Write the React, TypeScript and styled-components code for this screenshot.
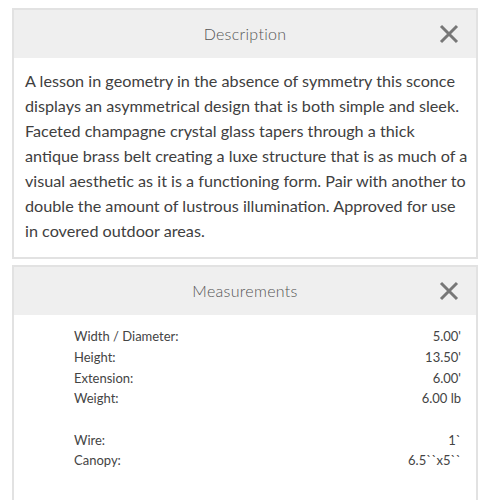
import React from "react";
import styled, { createGlobalStyle } from "styled-components";

const Global = createGlobalStyle`
  html, body { margin: 0; padding: 0; background: #fff; }
  body { font-family: "Lato", "Noto Sans", sans-serif; }
`;

const Page = styled.div`
  padding: 8px 12px 0;
  display: flex;
  flex-direction: column;
  gap: 6px;
`;

const Panel = styled.section`
  border: 2px solid #e2e2e2;
  background: #fff;
`;

const Header = styled.div`
  position: relative;
  height: 48px;
  background: #efefef;
  display: flex;
  align-items: center;
  justify-content: center;
`;

const Title = styled.div`
  font-size: 16px;
  font-weight: 300;
  color: #555;
  letter-spacing: 0.3px;
  margin-top: -2px;
`;

const Close = styled.button`
  position: absolute;
  right: 16px;
  top: 50%;
  transform: translateY(-50%);
  border: 0;
  background: none;
  padding: 0;
  width: 22px;
  height: 22px;
  display: flex;
  align-items: center;
  justify-content: center;
`;

const Body = styled.div`
  padding: 10px 10px 14px 11px;
  font-size: 16.2px;
  line-height: 25px;
  color: #404040;
  white-space: nowrap;
`;

const Rows = styled.div`
  padding: 11px 15px 40px 60px;
  display: flex;
  flex-direction: column;
`;

const Row = styled.div`
  display: flex;
  justify-content: space-between;
  height: 20.7px;
  align-items: center;
  font-size: 13px;
  color: #444;
`;

const X = () => (
  <svg width="20" height="20" viewBox="0 0 20 20">
    <path d="M2 2 L18 18 M18 2 L2 18" stroke="#777" strokeWidth="3" strokeLinecap="butt" />
  </svg>
);

const lines = [
  "A lesson in geometry in the absence of symmetry this sconce",
  "displays an asymmetrical design that is both simple and sleek.",
  "Faceted champagne crystal glass tapers through a thick",
  "antique brass belt creating a luxe structure that is as much of a",
  "visual aesthetic as it is a functioning form. Pair with another to",
  "double the amount of lustrous illumination. Approved for use",
  "in covered outdoor areas.",
];

const rows: [string, string][] = [
  ["Width / Diameter:", "5.00'"],
  ["Height:", "13.50'"],
  ["Extension:", "6.00'"],
  ["Weight:", "6.00 lb"],
  ["", ""],
  ["Wire:", "1`"],
  ["Canopy:", "6.5``x5``"],
];

export default function App() {
  return (
    <>
      <Global />
      <Page>
        <Panel>
          <Header>
            <Title>Description</Title>
            <Close aria-label="close"><X /></Close>
          </Header>
          <Body>
            {lines.map((l, i) => (
              <React.Fragment key={i}>
                {l}
                {i < lines.length - 1 && <br />}
              </React.Fragment>
            ))}
          </Body>
        </Panel>
        <Panel>
          <Header>
            <Title>Measurements</Title>
            <Close aria-label="close"><X /></Close>
          </Header>
          <Rows>
            {rows.map(([l, v], i) => (
              <Row key={i}>
                <span>{l}</span>
                <span>{v}</span>
              </Row>
            ))}
          </Rows>
        </Panel>
      </Page>
    </>
  );
}
